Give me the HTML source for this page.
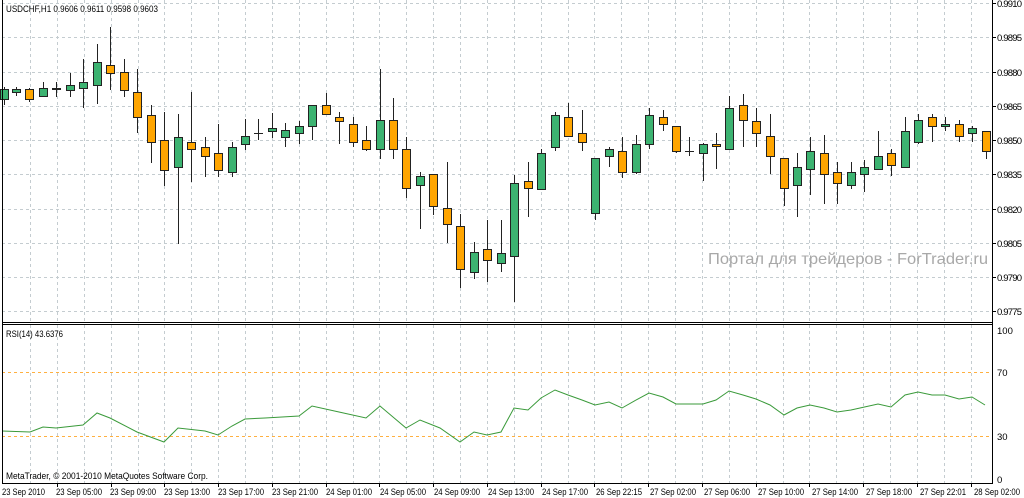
<!DOCTYPE html>
<html><head><meta charset="utf-8"><style>
html,body{margin:0;padding:0;background:#fff;}
svg{display:block;}
text{font-family:"Liberation Sans",sans-serif;font-size:9.5px;fill:#000;}
</style></head><body>
<svg width="1024" height="498" xmlns="http://www.w3.org/2000/svg">
<rect width="1024" height="498" fill="#fff"/>
<g stroke="#c4ccd0" stroke-dasharray="3,3" stroke-width="1">
<path d="M30.5 0V322M57.5 0V322M84.5 0V322M111.5 0V322M138.5 0V322M164.5 0V322M191.5 0V322M218.5 0V322M245.5 0V322M272.5 0V322M299.5 0V322M326.5 0V322M353.5 0V322M379.5 0V322M406.5 0V322M433.5 0V322M460.5 0V322M487.5 0V322M514.5 0V322M541.5 0V322M568.5 0V322M594.5 0V322M621.5 0V322M648.5 0V322M675.5 0V322M702.5 0V322M729.5 0V322M756.5 0V322M783.5 0V322M809.5 0V322M836.5 0V322M863.5 0V322M890.5 0V322M917.5 0V322M944.5 0V322M971.5 0V322"/>
<path d="M30.5 325V483M57.5 325V483M84.5 325V483M111.5 325V483M138.5 325V483M164.5 325V483M191.5 325V483M218.5 325V483M245.5 325V483M272.5 325V483M299.5 325V483M326.5 325V483M353.5 325V483M379.5 325V483M406.5 325V483M433.5 325V483M460.5 325V483M487.5 325V483M514.5 325V483M541.5 325V483M568.5 325V483M594.5 325V483M621.5 325V483M648.5 325V483M675.5 325V483M702.5 325V483M729.5 325V483M756.5 325V483M783.5 325V483M809.5 325V483M836.5 325V483M863.5 325V483M890.5 325V483M917.5 325V483M944.5 325V483M971.5 325V483"/>
<path d="M2 37.5H992M2 72.5H992M2 106.5H992M2 140.5H992M2 174.5H992M2 209.5H992M2 243.5H992M2 277.5H992M2 311.5H992M2 3.5H992"/>
</g>
<g stroke="#ffb040" stroke-dasharray="3,3" stroke-width="1"><path d="M2 372.5H992M2 436.5H992"/></g>

<g stroke="#222" stroke-width="1">
<path d="M4.5 87V105M16.5 87V96M29.5 88V102M43.5 82V97M56.5 82V97M70.5 73V97M83.5 59V108M97.5 44V104M110.5 27V90M124.5 59V97M137.5 69V133M151.5 105V163M164.5 112V186M178.5 114V244M191.5 92V182M205.5 137V177M218.5 124V177M232.5 142V177M245.5 119V150M258.5 119V140M272.5 113V138M285.5 123V147M299.5 121V144M312.5 105V140M326.5 93V114M339.5 112V144M353.5 117V147M366.5 126V151M380.5 69V159M393.5 98V159M406.5 137V198M420.5 172V229M433.5 174V215M447.5 162V243M460.5 214V288M474.5 242V279M487.5 220V282M501.5 220V272M514.5 175V302M528.5 162V217M541.5 149V189M555.5 112V151M568.5 103V136M582.5 110V151M595.5 158V220M609.5 147V167M622.5 137V178M636.5 135V174M649.5 108V149M663.5 110V131M676.5 126V153M689.5 137V156M703.5 143V181M716.5 133V169M729.5 96V149M743.5 94V147M756.5 108V147M770.5 114V174M784.5 158V206M797.5 153V217M810.5 137V195M824.5 135V204M837.5 162V204M851.5 162V189M864.5 160V192M878.5 131V169M891.5 149V176M905.5 117V167M918.5 114V144M932.5 114V142M945.5 117V131M959.5 120V142M972.5 126V142M986.5 131V159"/>
<path d="M254 133.5H263M685 151.5H694"/>
</g>
<g stroke="#222" stroke-width="1">
<g fill="#3cb371">
<rect x="0.5" y="89.5" width="8" height="10"/><rect x="12.5" y="89.5" width="8" height="3"/><rect x="39.5" y="88.5" width="8" height="8"/><rect x="66.5" y="85.5" width="8" height="5"/><rect x="79.5" y="82.5" width="8" height="6"/><rect x="93.5" y="62.5" width="8" height="23"/><rect x="174.5" y="137.5" width="8" height="30"/><rect x="228.5" y="147.5" width="8" height="25"/><rect x="241.5" y="136.5" width="8" height="8"/><rect x="268.5" y="128.5" width="8" height="3"/><rect x="281.5" y="130.5" width="8" height="7"/><rect x="295.5" y="126.5" width="8" height="7"/><rect x="308.5" y="105.5" width="8" height="21"/><rect x="376.5" y="120.5" width="8" height="29"/><rect x="416.5" y="176.5" width="8" height="9"/><rect x="470.5" y="252.5" width="8" height="20"/><rect x="497.5" y="253.5" width="8" height="10"/><rect x="510.5" y="183.5" width="8" height="73"/><rect x="537.5" y="153.5" width="8" height="36"/><rect x="551.5" y="115.5" width="8" height="32"/><rect x="591.5" y="158.5" width="8" height="55"/><rect x="605.5" y="149.5" width="8" height="7"/><rect x="632.5" y="144.5" width="8" height="28"/><rect x="645.5" y="115.5" width="8" height="29"/><rect x="699.5" y="144.5" width="8" height="9"/><rect x="725.5" y="108.5" width="8" height="41"/><rect x="793.5" y="167.5" width="8" height="18"/><rect x="806.5" y="151.5" width="8" height="18"/><rect x="847.5" y="172.5" width="8" height="13"/><rect x="860.5" y="167.5" width="8" height="7"/><rect x="874.5" y="156.5" width="8" height="13"/><rect x="901.5" y="131.5" width="8" height="36"/><rect x="914.5" y="120.5" width="8" height="22"/><rect x="941.5" y="124.5" width="8" height="2"/><rect x="968.5" y="128.5" width="8" height="5"/>
</g>
<g fill="#ffa500">
<rect x="25.5" y="89.5" width="8" height="10"/><rect x="52.5" y="88.5" width="8" height="1"/><rect x="106.5" y="65.5" width="8" height="8"/><rect x="120.5" y="72.5" width="8" height="18"/><rect x="133.5" y="92.5" width="8" height="25"/><rect x="147.5" y="115.5" width="8" height="27"/><rect x="160.5" y="140.5" width="8" height="30"/><rect x="187.5" y="142.5" width="8" height="7"/><rect x="201.5" y="147.5" width="8" height="9"/><rect x="214.5" y="153.5" width="8" height="17"/><rect x="322.5" y="105.5" width="8" height="9"/><rect x="335.5" y="117.5" width="8" height="4"/><rect x="349.5" y="124.5" width="8" height="18"/><rect x="362.5" y="140.5" width="8" height="9"/><rect x="389.5" y="120.5" width="8" height="29"/><rect x="402.5" y="149.5" width="8" height="39"/><rect x="429.5" y="174.5" width="8" height="32"/><rect x="443.5" y="208.5" width="8" height="16"/><rect x="456.5" y="226.5" width="8" height="43"/><rect x="483.5" y="249.5" width="8" height="11"/><rect x="524.5" y="181.5" width="8" height="7"/><rect x="564.5" y="117.5" width="8" height="19"/><rect x="578.5" y="133.5" width="8" height="9"/><rect x="618.5" y="151.5" width="8" height="21"/><rect x="659.5" y="117.5" width="8" height="7"/><rect x="672.5" y="126.5" width="8" height="25"/><rect x="712.5" y="144.5" width="8" height="2"/><rect x="739.5" y="105.5" width="8" height="15"/><rect x="752.5" y="121.5" width="8" height="12"/><rect x="766.5" y="136.5" width="8" height="20"/><rect x="780.5" y="158.5" width="8" height="30"/><rect x="820.5" y="153.5" width="8" height="21"/><rect x="833.5" y="172.5" width="8" height="11"/><rect x="887.5" y="153.5" width="8" height="12"/><rect x="928.5" y="117.5" width="8" height="9"/><rect x="955.5" y="124.5" width="8" height="12"/><rect x="982.5" y="131.5" width="8" height="20"/>
</g>
</g>

<polyline fill="none" stroke="#3a9a3a" stroke-width="1" points="2,431 30,432 43,427 56,428 83,425 97,413 110,418 137,432 164,442 178,428 205,431 218,435 232,426 245,419 265,418 299,416 312,406 339,412 366,418 380,406 406,428 420,420 440,428 460,442 474,432 487,435 501,432 514,408 528,410 541,398 555,390 568,395 582,400 595,405 609,402 622,408 636,400 649,393 663,397 676,404 703,404 716,400 729,391 743,395 756,399 770,405 784,415 797,408 810,405 824,408 837,412 851,410 860,408 878,404 891,407 905,395 918,392 932,395 945,395 959,399 972,397 985,405"/>

<g stroke="#000" stroke-width="1" fill="none">
<path d="M2.5 0V484"/>
<path d="M992.5 0V484"/>
<path d="M2 322.5H992M2 324.5H992M2 483.5H992"/>
<path d="M57.5 484V487M111.5 484V487M164.5 484V487M218.5 484V487M272.5 484V487M326.5 484V487M379.5 484V487M433.5 484V487M487.5 484V487M541.5 484V487M594.5 484V487M648.5 484V487M702.5 484V487M756.5 484V487M809.5 484V487M863.5 484V487M917.5 484V487M971.5 484V487"/>
<path d="M992 3.5H996M992 37.5H996M992 72.5H996M992 106.5H996M992 140.5H996M992 174.5H996M992 209.5H996M992 243.5H996M992 277.5H996M992 311.5H996"/>
</g>

<text x="6" y="12" textLength="152" lengthAdjust="spacingAndGlyphs">USDCHF,H1  0.9606 0.9611 0.9598 0.9603</text>
<text x="6" y="337" textLength="57" lengthAdjust="spacingAndGlyphs">RSI(14) 43.6376</text>
<text x="6" y="479" textLength="202" lengthAdjust="spacingAndGlyphs">MetaTrader, © 2001-2010 MetaQuotes Software Corp.</text>
<text x="708" y="264" style="font-size:16px;fill:#a8a8a8" textLength="280" lengthAdjust="spacingAndGlyphs">Портал для трейдеров - ForTrader.ru</text>

<g>
<text x="997" y="7" textLength="25">0.9910</text><text x="997" y="41" textLength="25">0.9895</text><text x="997" y="76" textLength="25">0.9880</text><text x="997" y="110" textLength="25">0.9865</text><text x="997" y="144" textLength="25">0.9850</text><text x="997" y="178" textLength="25">0.9835</text><text x="997" y="213" textLength="25">0.9820</text><text x="997" y="247" textLength="25">0.9805</text><text x="997" y="281" textLength="25">0.9790</text><text x="997" y="315" textLength="25">0.9775</text>
<text x="997" y="334">100</text><text x="997" y="376">70</text><text x="997" y="440">30</text><text x="997" y="483">0</text>
</g>
<g>
<text x="2" y="495" textLength="43" lengthAdjust="spacingAndGlyphs">23 Sep 2010</text><text x="56" y="495" textLength="46" lengthAdjust="spacingAndGlyphs">23 Sep 05:00</text><text x="110" y="495" textLength="46" lengthAdjust="spacingAndGlyphs">23 Sep 09:00</text><text x="164" y="495" textLength="46" lengthAdjust="spacingAndGlyphs">23 Sep 13:00</text><text x="218" y="495" textLength="46" lengthAdjust="spacingAndGlyphs">23 Sep 17:00</text><text x="272" y="495" textLength="46" lengthAdjust="spacingAndGlyphs">23 Sep 21:00</text><text x="326" y="495" textLength="46" lengthAdjust="spacingAndGlyphs">24 Sep 01:00</text><text x="380" y="495" textLength="46" lengthAdjust="spacingAndGlyphs">24 Sep 05:00</text><text x="434" y="495" textLength="46" lengthAdjust="spacingAndGlyphs">24 Sep 09:00</text><text x="488" y="495" textLength="46" lengthAdjust="spacingAndGlyphs">24 Sep 13:00</text><text x="542" y="495" textLength="46" lengthAdjust="spacingAndGlyphs">24 Sep 17:00</text><text x="596" y="495" textLength="46" lengthAdjust="spacingAndGlyphs">26 Sep 22:15</text><text x="650" y="495" textLength="46" lengthAdjust="spacingAndGlyphs">27 Sep 02:00</text><text x="704" y="495" textLength="46" lengthAdjust="spacingAndGlyphs">27 Sep 06:00</text><text x="758" y="495" textLength="46" lengthAdjust="spacingAndGlyphs">27 Sep 10:00</text><text x="812" y="495" textLength="46" lengthAdjust="spacingAndGlyphs">27 Sep 14:00</text><text x="866" y="495" textLength="46" lengthAdjust="spacingAndGlyphs">27 Sep 18:00</text><text x="920" y="495" textLength="46" lengthAdjust="spacingAndGlyphs">27 Sep 22:01</text><text x="974" y="495" textLength="46" lengthAdjust="spacingAndGlyphs">28 Sep 02:00</text>
</g>
</svg>
</body></html>
